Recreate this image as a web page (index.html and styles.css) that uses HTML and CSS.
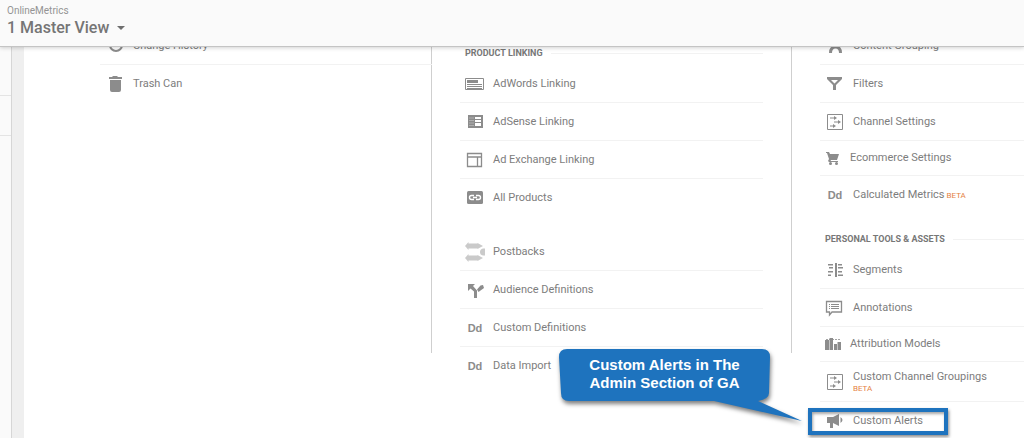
FILE: index.html
```html
<!DOCTYPE html>
<html lang="en">
<head>
<meta charset="utf-8">
<meta name="viewport" content="width=device-width, initial-scale=1">
<title>OnlineMetrics – Admin</title>
<link rel="stylesheet" href="styles.css">
</head>
<body>
<svg class="sprite" aria-hidden="true">
  <symbol id="flow" viewBox="0 0 20 20"><path d="M2.500 2.500h15v15h-15z" fill="none" stroke="currentColor"/><path d="M5 5.500h4V4l3 2-3 2V6.500H5zM9 9.500h4V8l3 2-3 2v-1.500H9zM5 13.500h3V12l3 2-3 2v-1.500H5z" fill="currentColor"/></symbol>
</svg>
<div class="app">
  <header class="topbar">
    <span class="account">OnlineMetrics</span>
    <button class="view" type="button">1 Master View <svg viewBox="0 0 8 4" class="caret"><path d="M0 0h8L4 4z"/></svg></button>
  </header>
  <div class="body">
    <aside class="rail"><div class="rail-item"></div><div class="rail-item"></div></aside>
    <main class="columns">
      <section class="column account-column">
        <ul class="list">
          <li class="row lined"><a href="#"><svg class="icon" viewBox="0 0 20 20"><circle cx="11" cy="9" r="6" fill="none" stroke="currentColor" stroke-width="2"/></svg>Change History</a></li>
          <li class="row"><a href="#"><svg class="icon" viewBox="0 0 20 20"><path d="M4 3h3l1-1h4l1 1h4v2H4zM5 6h11v10q0 2-2 2H7q-2 0-2-2z"/></svg>Trash Can</a></li>
        </ul>
      </section>
      <section class="column property-column">
        <h2 class="heading">PRODUCT LINKING</h2>
        <ul class="list">
          <li class="row lined"><a href="#"><svg class="icon" viewBox="0 0 20 20"><path d="M.5 4.500h18v11H.5z" fill="none" stroke="currentColor"/><path d="M2 6h11v3H2zM2 10h15v1H2zM2 12h15v1H2zM2 14h15v1H2z"/></svg>AdWords Linking</a></li>
          <li class="row lined"><a href="#"><svg class="icon" viewBox="0 0 20 20"><path fill-rule="evenodd" d="M3 3h15v13H3zM10 5v2h6V5zM10 8v2h6V8zM10 11v3h6v-3z"/><path d="M4 6h5M4 8.500h5M4 11h5M4 13.500h5" stroke="#b0b0b0"/></svg>AdSense Linking</a></li>
          <li class="row lined"><a href="#"><svg class="icon" viewBox="0 0 20 20"><path d="M2.500 3.500h14v13h-14zM3 7h13M12.500 7.500v9" fill="none" stroke="currentColor" stroke-width="1.300"/></svg>Ad Exchange Linking</a></li>
          <li class="row"><a href="#"><svg class="icon" viewBox="0 0 20 20"><rect x="2" y="3" width="16" height="13" rx="1.500"/><path d="M9 7.500H6.500a2 2 0 0 0 0 4H9M11 7.500h2.500a2 2 0 0 1 0 4H11M8 9.500h4" fill="none" stroke="#fff" stroke-width="1.400"/></svg>All Products</a></li>
        </ul>
        <ul class="list second">
          <li class="row lined"><a href="#"><svg class="icon pale" viewBox="0 0 20 20"><path d="M0 4l3.500-4v1.500h9V1L18 4l-5.500 3v-.5h-9V8zM0 16l3.500-4v1.500h9V13l5.500 3-5.500 3v-.500h-9V20z"/><path d="M20 6.500v7h-2q-3-.5-3-3.500t3-3.500z"/></svg>Postbacks</a></li>
          <li class="row lined"><a href="#"><svg class="icon" viewBox="0 0 20 20"><path d="M3 4h7L8 6l4 4.500V18H9v-6.500L5.500 8.500 3 11zM18 5l1 3-5.500 4-1.500-2.500 3.500-4z"/></svg>Audience Definitions</a></li>
          <li class="row lined"><a href="#"><span class="icon dd">Dd</span>Custom Definitions</a></li>
          <li class="row"><a href="#"><span class="icon dd">Dd</span>Data Import</a></li>
        </ul>
      </section>
      <section class="column view-column">
        <ul class="list">
          <li class="row lined"><a href="#"><svg class="icon" viewBox="0 0 20 20"><path d="M5.500 17q0-6 5-6t5 6M10.500 3v7" fill="none" stroke="currentColor" stroke-width="3"/></svg>Content Grouping</a></li>
          <li class="row lined"><a href="#"><svg class="icon" viewBox="0 0 20 20"><path fill-rule="evenodd" d="M2 3h15v2l-6 6v5H8v-5L2 5zM6 6l3.500 3.500L13 6z"/></svg>Filters</a></li>
          <li class="row lined"><a href="#"><svg class="icon"><use href="#flow"/></svg>Channel Settings</a></li>
          <li class="row lined compact"><a href="#"><svg class="icon" viewBox="0 0 20 20"><path d="M1 4h3l1 2h9l-2 6H6l-.5 1H13v1H4l-1-1 1-2-2-6H1z"/><circle cx="5.500" cy="15.500" r="1.500"/><circle cx="11.500" cy="15.500" r="1.500"/></svg>Ecommerce Settings</a></li>
          <li class="row"><a href="#"><span class="icon dd">Dd</span><span class="inline-label">Calculated Metrics<small class="beta">BETA</small></span></a></li>
        </ul>
        <h2 class="heading personal">PERSONAL TOOLS &amp; ASSETS</h2>
        <ul class="list">
          <li class="row lined"><a href="#"><svg class="icon" viewBox="0 0 20 20"><path d="M3 4h5v1.500H3zM4 7h4v1.500H4zM3 11h5v1.500H3zM3 14.500h3V16H3zM10 3h2v14h-2zM13 4h4v1.500h-4zM13 7h5v1.500h-5zM13 11h4v1.500h-4zM13 14.500h5V16h-5z"/></svg>Segments</a></li>
          <li class="row lined"><a href="#"><svg class="icon" viewBox="0 0 20 20"><path d="M1.500 3.500h15v10.500H7L4.500 17v-3h-3z" fill="none" stroke="currentColor" stroke-width="1.300"/><path d="M4 6h1v1H4zM6 6h8v1H6zM4 8h1v1H4zM6 8h8v1H6zM4 10h1v1H4zM6 10h8v1H6z"/></svg>Annotations</a></li>
          <li class="row lined compact"><a href="#"><svg class="icon" viewBox="0 0 20 20"><path d="M0 6h4v10H0zM4.500 4H8v12H4.500zM9 10h3v6H9zM12.500 8H16v8h-3.500z"/><path d="M1 5.500h15" stroke="currentColor" stroke-width=".8" stroke-dasharray="2 1"/></svg>Attribution Models</a></li>
          <li class="row lined tall"><a href="#"><svg class="icon"><use href="#flow"/></svg><span>Custom Channel Groupings<small class="beta below">BETA</small></span></a></li>
          <li class="row alerts"><a href="#"><svg class="icon" viewBox="0 0 20 20"><path d="M2 6h6l6-3v12l-6-3v5H5v-5H2zM15.500 6q4 3 0 6z"/></svg>Custom Alerts</a>
            <div class="highlight"></div>
            <div class="callout">
              <svg class="bubble" viewBox="0 0 244 74"><path d="M8 0H203Q211 0 211 8L210 44Q210 50 199 52L243 72 155 52H10Q2 52 2 44L0 8Q0 0 8 0z"/></svg>
              <p>Custom Alerts in The<br>Admin Section of GA</p>
            </div>
          </li>
        </ul>
      </section>
    </main>
  </div>
</div>
</body>
</html>
```
FILE: styles.css
```css
* { box-sizing: border-box; }
body { margin: 0; font-family: Roboto, Arial, sans-serif; font-size: 11px; line-height: 14px; color: #7d7d7d; background: #fff; }
.sprite { position: absolute; width: 0; height: 0; }
.app { height: 100vh; display: flex; flex-direction: column; overflow: hidden; }
.topbar { position: relative; z-index: 1; flex: none; padding: 4px 7px 8px; background: #fafafa; border-bottom: 1px solid #c4c4c4; box-shadow: 0 1px 4px rgba(0, 0, 0, .18); }
.account { display: block; color: #949494; font-size: 10px; }
.view { display: flex; align-items: center; gap: 8px; padding: 0; border: 0; background: none; color: #757575; font: 500 16px/20px Roboto, Arial, sans-serif; }
.caret { width: 8px; height: 4px; fill: #6e6e6e; }
.body { flex: 1; display: flex; min-height: 0; }
.rail { flex: none; width: 24px; display: grid; grid-template-columns: 11px; grid-template-rows: 49px 40px 1fr; background: linear-gradient(90deg, #fafafa 11px, #d6d6d6 11px 12px, #efefef 12px); }
.rail-item { border-bottom: 1px solid #e4e4e4; }
.columns { flex: 1; display: grid; grid-template-columns: 408fr 360fr 232fr; align-items: start; margin-top: -20px; }
.column { min-width: 0; }
.account-column { padding-left: 76px; }
.property-column { padding: 14px 29px 0 28px; }
.view-column { padding-left: 28px; }
.account-column, .property-column { min-height: 326px; background: linear-gradient(#cfcfcf, #cfcfcf) right top / 1px 326px no-repeat; }
.list { margin: 0; padding: 0; list-style: none; }
.second { margin-top: 16px; }
.row { position: relative; height: 38px; }
.lined { border-bottom: 1px solid #f2f2f2; }
.row a { display: flex; align-items: center; gap: 8px; height: 100%; padding-left: 5px; color: inherit; text-decoration: none; white-space: nowrap; }
.compact { height: 35px; }
.compact a { gap: 5px; }
.tall { height: 40px; }
.icon { flex: none; width: 20px; height: 20px; fill: currentColor; color: #8c8c8c; }
.pale { color: #cacaca; }
.dd { font: 700 11px/20px "Liberation Sans", Arial, sans-serif; text-align: center; }
.heading { display: flex; align-items: center; gap: 8px; height: 24px; margin: 0; padding-left: 5px; font-size: 9px; line-height: 12px; font-weight: 700; color: #777; white-space: nowrap; }
.heading::after { content: ""; flex: 1; height: 1px; background: #f2f2f2; }
.personal { margin-top: 13px; }
.inline-label { display: flex; align-items: baseline; gap: 2px; }
.beta { color: #e58345; font-size: 8px; line-height: 10px; }
.below { display: block; }
.highlight { position: absolute; left: -12px; top: 6px; width: 140px; height: 27px; border: 4px solid #1e73be; box-shadow: 1px 2px 3px rgba(0, 0, 0, .45), inset 1px 2px 3px rgba(0, 0, 0, .35); pointer-events: none; }
.callout { position: absolute; left: -261px; top: -53px; width: 244px; height: 74px; }
.bubble { position: absolute; inset: 0; fill: #1e73be; overflow: visible; filter: drop-shadow(1px 3px 2px rgba(0, 0, 0, .5)); }
.callout p { position: relative; width: 211px; margin: 0; padding-top: 7px; color: #fff; font: 700 15px/18px "Liberation Sans", Arial, sans-serif; text-align: center; }
```
